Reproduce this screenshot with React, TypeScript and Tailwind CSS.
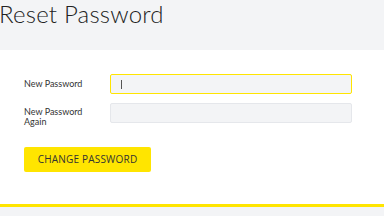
import React from "react";

export default function App() {
  return (
    <div className="w-[384px] h-[216px] overflow-hidden bg-white flex flex-col" style={{ fontFamily: '"Open Sans", "Liberation Sans", sans-serif' }}>
      <div className="h-[50px] bg-[#f3f4f6] shrink-0">
        <h1 className="text-[24px] leading-[27px] font-light text-[#222] -ml-[1px] tracking-[0.2px]" style={{ fontFamily: 'Lato, "Open Sans", sans-serif', fontWeight: 300 }}>Reset Password</h1>
      </div>
      <div className="h-[154px] shrink-0 pl-[24px] pt-[24px]">
        <div className="flex items-center h-[20px]">
          <label className="w-[86px] text-[9px] text-[#333]" style={{ fontFamily: 'Lato, "Open Sans", sans-serif' }}>New Password</label>
          <div className="w-[242px] h-[20px] bg-[#f3f4f6] border border-[#ffe500] rounded-[2px] flex items-center pl-[10px]">
            <div className="w-[1px] h-[9px] bg-[#555]" />
          </div>
        </div>
        <div className="flex items-start h-[20px] mt-[9px]">
          <label className="w-[86px] text-[9px] leading-[10px] text-[#333] pt-[4px]" style={{ fontFamily: 'Lato, "Open Sans", sans-serif' }}>New Password<br />Again</label>
          <div className="w-[242px] h-[20px] bg-[#f3f4f6] border border-[#e5e7eb] rounded-[2px]" />
        </div>
        <button className="mt-[24px] w-[127px] h-[25px] bg-[#ffe500] rounded-[2px] text-[10px] text-[#333] tracking-[0.2px] flex items-center justify-center">CHANGE PASSWORD</button>
      </div>
      <div className="h-[3px] bg-[#ffe500] shrink-0" />
      <div className="flex-1 bg-[#f3f4f6]" />
    </div>
  );
}
